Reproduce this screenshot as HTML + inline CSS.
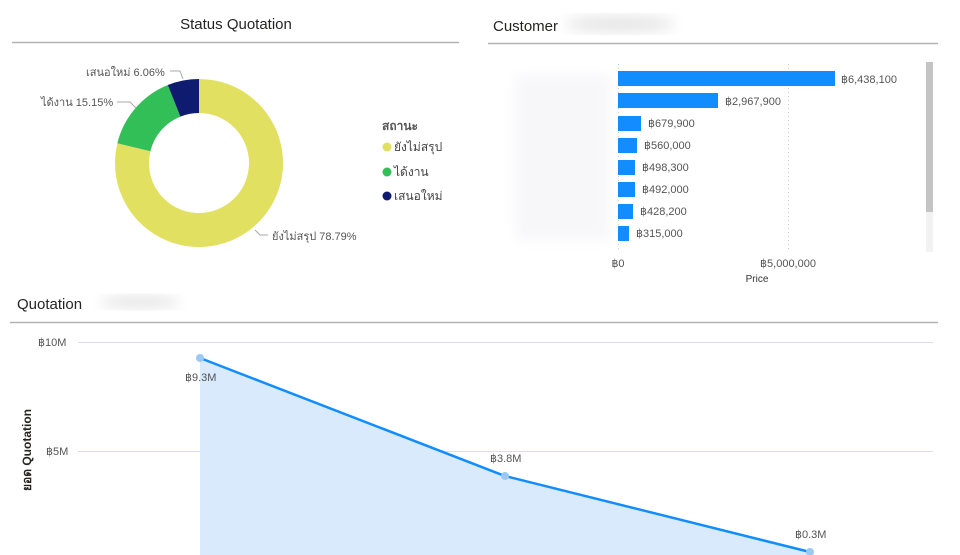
<!DOCTYPE html>
<html><head><meta charset="utf-8"><style>
body{margin:0;width:960px;height:555px;overflow:hidden;background:#fff;font-family:"Liberation Sans","Noto Sans CJK SC",sans-serif;}
svg{position:absolute;left:0;top:0}
</style></head><body>
<svg width="960" height="555" viewBox="0 0 960 555" xmlns="http://www.w3.org/2000/svg" font-family="Liberation Sans, Noto Sans CJK SC, sans-serif">
<defs><filter id="b"><feGaussianBlur stdDeviation="6"/></filter></defs>
<!-- Status Quotation -->
<text x="236" y="29" font-size="15" text-anchor="middle" fill="#252423">Status Quotation</text>
<line x1="12" y1="42.5" x2="459" y2="42.5" stroke="#b3b3b3" stroke-width="1.5"/>
<path d="M199,79 A84,84 0 1 1 117.35,143.25 L150.4,151.24 A50,50 0 1 0 199,113 Z" fill="#e1e060"/>
<path d="M117.35,143.25 A84,84 0 0 1 167.8,85 L180.4,116.6 A50,50 0 0 0 150.4,151.24 Z" fill="#33bf57"/>
<path d="M167.8,85 A84,84 0 0 1 199,79 L199,113 A50,50 0 0 0 180.4,116.6 Z" fill="#0f1b6f"/>
<g font-size="11" fill="#555">
<text x="86" y="76">เสนอใหม่ 6.06%</text>
<text x="41" y="106">ได้งาน 15.15%</text>
<text x="272" y="240">ยังไม่สรุป 78.79%</text>
</g>
<g stroke="#aaa" fill="none"><path d="M170,71 H180 L183,79"/><path d="M117,102 H130 L136,108"/><path d="M255,230 L260,235 H268"/></g>
<text x="382" y="130" font-size="12" fill="#555" font-weight="bold">สถานะ</text>
<circle cx="387" cy="147" r="4.5" fill="#e1e060"/><text x="394" y="151" font-size="12" fill="#444">ยังไม่สรุป</text>
<circle cx="387" cy="172" r="4.5" fill="#33bf57"/><text x="394" y="176" font-size="12" fill="#444">ได้งาน</text>
<circle cx="387" cy="196" r="4.5" fill="#0f1b6f"/><text x="394" y="200" font-size="12" fill="#444">เสนอใหม่</text>
<!-- Customer -->
<text x="493" y="31" font-size="15" fill="#252423">Customer</text>
<ellipse cx="620" cy="24" rx="55" ry="9" fill="#e8e8e8" filter="url(#b)"/>
<line x1="488" y1="43.5" x2="938" y2="43.5" stroke="#b3b3b3" stroke-width="1.5"/>
<rect x="515" y="75" width="95" height="165" fill="#f0f0f5" filter="url(#b)" opacity="0.5"/>
<line x1="618.5" y1="64" x2="618.5" y2="250" stroke="#ccc" stroke-dasharray="1,3"/>
<line x1="788.5" y1="64" x2="788.5" y2="250" stroke="#ccc" stroke-dasharray="1,3"/>
<g fill="#118dff">
<rect x="618" y="71" width="217" height="15"/><rect x="618" y="93" width="100" height="15"/>
<rect x="618" y="116" width="23" height="15"/><rect x="618" y="138" width="19" height="15"/>
<rect x="618" y="160" width="17" height="15"/><rect x="618" y="182" width="17" height="15"/>
<rect x="618" y="204" width="15" height="15"/><rect x="618" y="226" width="11" height="15"/>
</g>
<g font-size="11" fill="#555">
<text x="841" y="83">฿6,438,100</text><text x="725" y="105">฿2,967,900</text>
<text x="648" y="127">฿679,900</text><text x="644" y="149">฿560,000</text>
<text x="642" y="171">฿498,300</text><text x="642" y="193">฿492,000</text>
<text x="640" y="215">฿428,200</text><text x="636" y="237">฿315,000</text>
<text x="618" y="267" text-anchor="middle">฿0</text><text x="788" y="267" text-anchor="middle">฿5,000,000</text>
<text x="757" y="282" text-anchor="middle" font-size="10" fill="#333">Price</text>
</g>
<rect x="926" y="62" width="7" height="190" fill="#f2f2f2"/><rect x="926" y="62" width="7" height="150" fill="#c4c4c4"/>
<!-- Quotation line -->
<text x="17" y="309" font-size="15" fill="#252423">Quotation</text>
<ellipse cx="140" cy="302" rx="40" ry="7" fill="#e8e8e8" filter="url(#b)"/>
<line x1="10" y1="322.5" x2="938" y2="322.5" stroke="#b3b3b3" stroke-width="1.5"/>
<line x1="78" y1="342.5" x2="933" y2="342.5" stroke="#dcdcf0"/>
<line x1="78" y1="451.5" x2="933" y2="451.5" stroke="#dcdcf0"/>
<g font-size="11" fill="#555"><text x="38" y="346">฿10M</text><text x="46" y="455">฿5M</text></g>
<text transform="translate(31,450) rotate(-90)" font-size="12" font-weight="bold" fill="#252423" text-anchor="middle">ยอด Quotation</text>
<path d="M200,358 L505,476 L810,552 L810,555 L200,555 Z" fill="#d8eafc"/>
<polyline points="200,358 505,476 810,552" fill="none" stroke="#118dff" stroke-width="2.5"/>
<g fill="#9cc8f4"><circle cx="200" cy="358" r="4"/><circle cx="505" cy="476" r="4"/><circle cx="810" cy="552" r="4"/></g>
<g font-size="11" fill="#555"><text x="185" y="381">฿9.3M</text><text x="490" y="462">฿3.8M</text><text x="795" y="538">฿0.3M</text></g>
</svg>
</body></html>
